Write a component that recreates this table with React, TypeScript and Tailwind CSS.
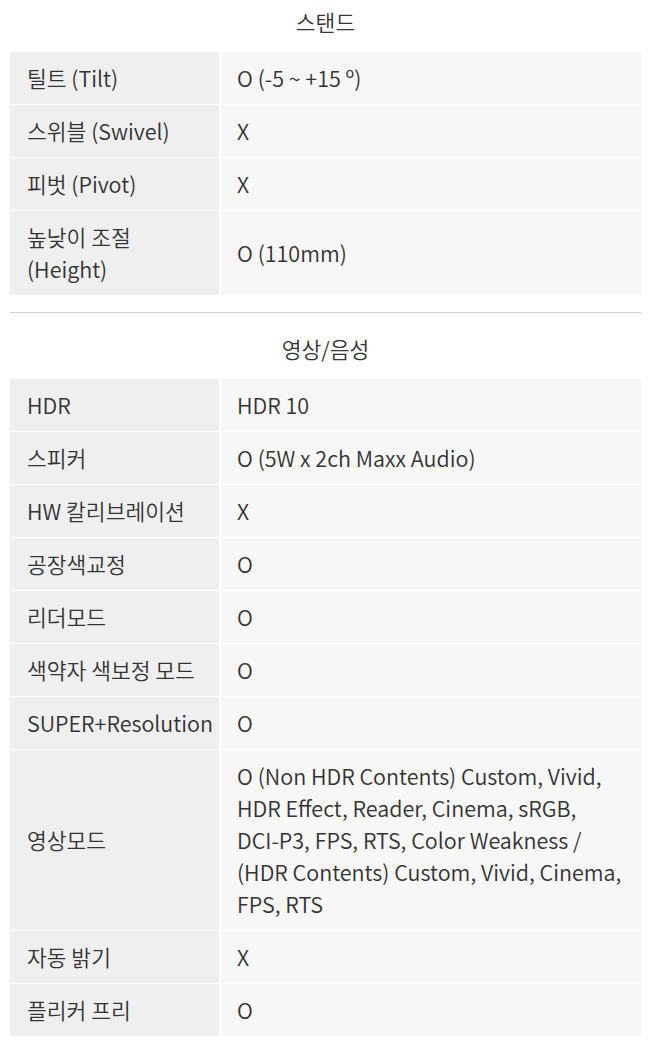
const font = {
  fontFamily:
    '"Noto Sans CJK KR DemiLight", "Noto Sans CJK KR Light", "Noto Sans CJK KR", "Noto Sans", sans-serif',
};

type Row = { label: string; value: string };

const stand: Row[] = [
  { label: '틸트 (Tilt)', value: 'O (-5 ~ +15 º)' },
  { label: '스위블 (Swivel)', value: 'X' },
  { label: '피벗 (Pivot)', value: 'X' },
  { label: '높낮이 조절\n(Height)', value: 'O (110mm)' },
];

// line breaks follow the source layout
const video: Row[] = [
  { label: 'HDR', value: 'HDR 10' },
  { label: '스피커', value: 'O (5W x 2ch Maxx Audio)' },
  { label: 'HW 칼리브레이션', value: 'X' },
  { label: '공장색교정', value: 'O' },
  { label: '리더모드', value: 'O' },
  { label: '색약자 색보정 모드', value: 'O' },
  { label: 'SUPER+Resolution', value: 'O' },
  {
    label: '영상모드',
    value:
      'O (Non HDR Contents) Custom, Vivid,\nHDR Effect, Reader, Cinema, sRGB,\nDCI-P3, FPS, RTS, Color Weakness /\n(HDR Contents) Custom, Vivid, Cinema,\nFPS, RTS',
  },
  { label: '자동 밝기', value: 'X' },
  { label: '플리커 프리', value: 'O' },
];

function SpecTable({ rows }: { rows: Row[] }) {
  return (
    <div className="grid grid-cols-[209px_1fr] gap-x-[2px] gap-y-[1px]">
      {rows.map((r) => (
        <div key={r.label} className="contents">
          <div className="bg-[#efefef] pl-[17px] pr-1 py-[10px] min-h-[52px] flex items-center leading-[32px] whitespace-pre-line">
            {r.label}
          </div>
          <div className="bg-[#f7f7f7] pl-[16px] pr-[4px] py-[10px] min-h-[52px] flex items-center leading-[32px] whitespace-pre-line">
            {r.value}
          </div>
        </div>
      ))}
    </div>
  );
}

export default function App() {
  return (
    <div
      className="w-[651px] bg-white text-[#333] text-[21.5px] font-light px-[10px] pb-[11px]"
      style={font}
    >
      <div className="h-[52px] flex items-center justify-center pb-[8px]">스탠드</div>
      <SpecTable rows={stand} />
      <div className="mt-[17px] border-t border-[#d0d0d0]" />
      <div className="h-[66px] flex items-center justify-center pt-[6px]">영상/음성</div>
      <SpecTable rows={video} />
    </div>
  );
}
